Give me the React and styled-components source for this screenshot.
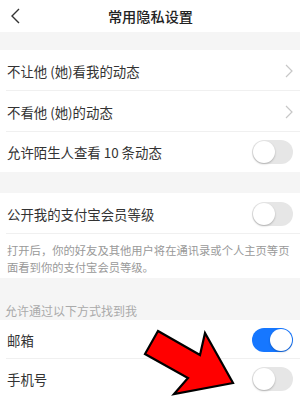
import React, { useState } from "react";
import styled, { createGlobalStyle } from "styled-components";

const GlobalStyle = createGlobalStyle`
  html, body {
    margin: 0;
    padding: 0;
    background: #fff;
  }
  body {
    font-family: "Noto Sans CJK SC", "Noto Sans", sans-serif;
    -webkit-font-smoothing: antialiased;
  }
`;

const Page = styled.div`
  position: relative;
  width: 300px;
  height: 397px;
  overflow: hidden;
  background: #fff;
  color: #333;
`;

const Header = styled.div`
  height: 32px;
  display: flex;
  align-items: center;
  justify-content: center;
  position: relative;
  background: #fff;
`;

const BackButton = styled.div`
  position: absolute;
  left: 8px;
  top: 7px;
  width: 14px;
  height: 17px;
  display: flex;
  align-items: center;
  justify-content: center;
`;

const Title = styled.div`
  font-size: 14.2px;
  font-weight: 500;
  color: #222;
  padding-left: 1px;
`;

const Band = styled.div`
  height: ${(p) => p.$h}px;
  background: #f5f5f5;
  display: flex;
  align-items: flex-end;
  padding-left: 5px;
  box-sizing: border-box;
`;

const SectionLabel = styled.div`
  font-size: 12px;
  color: #aaa;
  line-height: 16px;
  padding-bottom: 1px;
`;

const Row = styled.div`
  height: ${(p) => p.$h}px;
  display: flex;
  align-items: center;
  justify-content: space-between;
  padding: 0 7px;
  box-sizing: border-box;
  position: relative;
  background: #fff;

  &::after {
    content: "";
    display: ${(p) => (p.$line ? "block" : "none")};
    position: absolute;
    left: 6px;
    right: 0;
    bottom: 0;
    height: 1px;
    background: #f0f0f0;
  }
`;

const Label = styled.span`
  font-size: 13.4px;
  color: #333;
  white-space: nowrap;
`;

const Desc = styled.div`
  height: 44px;
  box-sizing: border-box;
  padding: 8px 2px 0 7px;
  font-size: 11.3px;
  line-height: 16.5px;
  color: #999;
`;

const Track = styled.div`
  width: 41px;
  height: 24px;
  border-radius: 12px;
  background: ${(p) => (p.$on ? "#1677ff" : "#e6e6e6")};
  position: relative;
  cursor: pointer;
  flex-shrink: 0;
`;

const Knob = styled.div`
  position: absolute;
  top: 1px;
  left: ${(p) => (p.$on ? "18px" : "1px")};
  width: 22px;
  height: 22px;
  border-radius: 50%;
  background: #fff;
  box-shadow: 0 1px 2px rgba(0, 0, 0, 0.25);
`;

const Overlay = styled.svg`
  position: absolute;
  left: 0;
  top: 0;
  pointer-events: none;
`;

const Toggle = ({ initial }) => {
  const [on, setOn] = useState(initial);
  return (
    <Track $on={on} onClick={() => setOn(!on)}>
      <Knob $on={on} />
    </Track>
  );
};

const Chevron = () => (
  <svg width="8" height="14" viewBox="0 0 8 14">
    <path d="M1 1 L7 7 L1 13" fill="none" stroke="#c7c7c7" strokeWidth="1.2" />
  </svg>
);

const App = () => {
  return (
    <Page>
      <GlobalStyle />
      <Header>
        <BackButton>
          <svg width="10" height="16" viewBox="0 0 10 16">
            <path d="M9 1 L2 8 L9 15" fill="none" stroke="#333" strokeWidth="1.4" />
          </svg>
        </BackButton>
        <Title>常用隐私设置</Title>
      </Header>
      <Band $h={18} />
      <Row $h={41} $line>
        <Label>不让他 (她)看我的动态</Label>
        <Chevron />
      </Row>
      <Row $h={41} $line>
        <Label>不看他 (她)的动态</Label>
        <Chevron />
      </Row>
      <Row $h={40}>
        <Label>允许陌生人查看 10 条动态</Label>
        <Toggle initial={false} />
      </Row>
      <Band $h={21} />
      <Row $h={41} $line>
        <Label>公开我的支付宝会员等级</Label>
        <Toggle initial={false} />
      </Row>
      <Desc>打开后，你的好友及其他用户将在通讯录或个人主页等页面看到你的支付宝会员等级。</Desc>
      <Band $h={42}>
        <SectionLabel>允许通过以下方式找到我</SectionLabel>
      </Band>
      <Row $h={39} $line>
        <Label>邮箱</Label>
        <Toggle initial={true} />
      </Row>
      <Row $h={39}>
        <Label>手机号</Label>
        <Toggle initial={false} />
      </Row>
      <Overlay width="300" height="397" viewBox="0 0 300 397">
        <polygon
          points="158,331 200,355 205,333 233,383 174,394 188,378 145,354"
          fill="#ff0000"
          stroke="#000"
          strokeWidth="2.2"
          strokeLinejoin="miter"
        />
      </Overlay>
    </Page>
  );
};

export default App;
